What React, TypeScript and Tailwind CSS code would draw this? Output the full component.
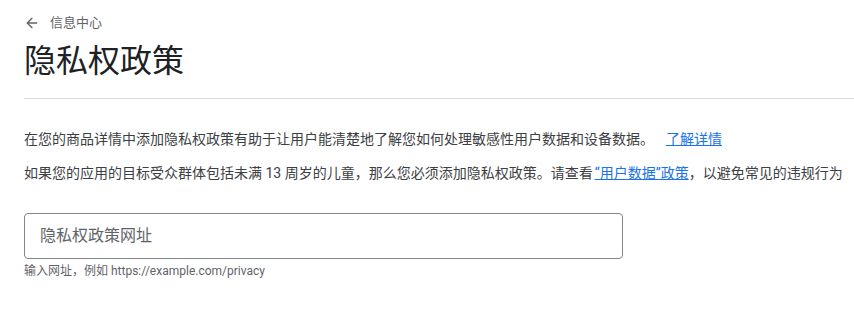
import React from 'react';
import { ArrowLeft } from 'lucide-react';

export default function App() {
  return (
    <div
      className="w-[854px] h-[309px] overflow-hidden bg-white pl-6"
      style={{ fontFamily: 'Roboto, "Noto Sans CJK SC", sans-serif' }}
    >
      <div className="flex items-center gap-[10px] pt-[16px] h-[30px] text-[#5f6368]">
        <ArrowLeft size={16} strokeWidth={2} />
        <span className="text-[13px] leading-[14px]">信息中心</span>
      </div>
      <h1 className="mt-[11px] text-[32px] leading-[40px] text-[#202124] font-normal">隐私权政策</h1>
      <div className="mt-[17px] border-t border-[#dadce0]" />
      <p className="mt-[30px] text-[14px] leading-[20px] text-[#3c4043] whitespace-nowrap">
        在您的商品详情中添加隐私权政策有助于让用户能清楚地了解您如何处理敏感性用户数据和设备数据。
        <a href="#" className="ml-[12px] text-[#1a73e8] underline">了解详情</a>
      </p>
      <p className="mt-[14px] text-[14px] leading-[20px] text-[#3c4043] whitespace-nowrap">
        如果您的应用的目标受众群体包括未满 13 周岁的儿童，那么您必须添加隐私权政策。请查看
        <a href="#" className="ml-[2px] text-[#1a73e8] underline">“用户数据”政策</a>
        ，以避免常见的违规行为
      </p>
      <div className="mt-[30px] w-[599px] h-[46px] rounded-[4px] border border-[#80868b] flex items-center px-[15px]">
        <input
          className="w-full outline-none text-[16px] text-[#202124] placeholder:text-[#5f6368] bg-transparent"
          placeholder="隐私权政策网址"
        />
      </div>
      <div className="mt-[4px] text-[12px] leading-[16px] text-[#5f6368]">
        输入网址，例如 https://example.com/privacy
      </div>
    </div>
  );
}
